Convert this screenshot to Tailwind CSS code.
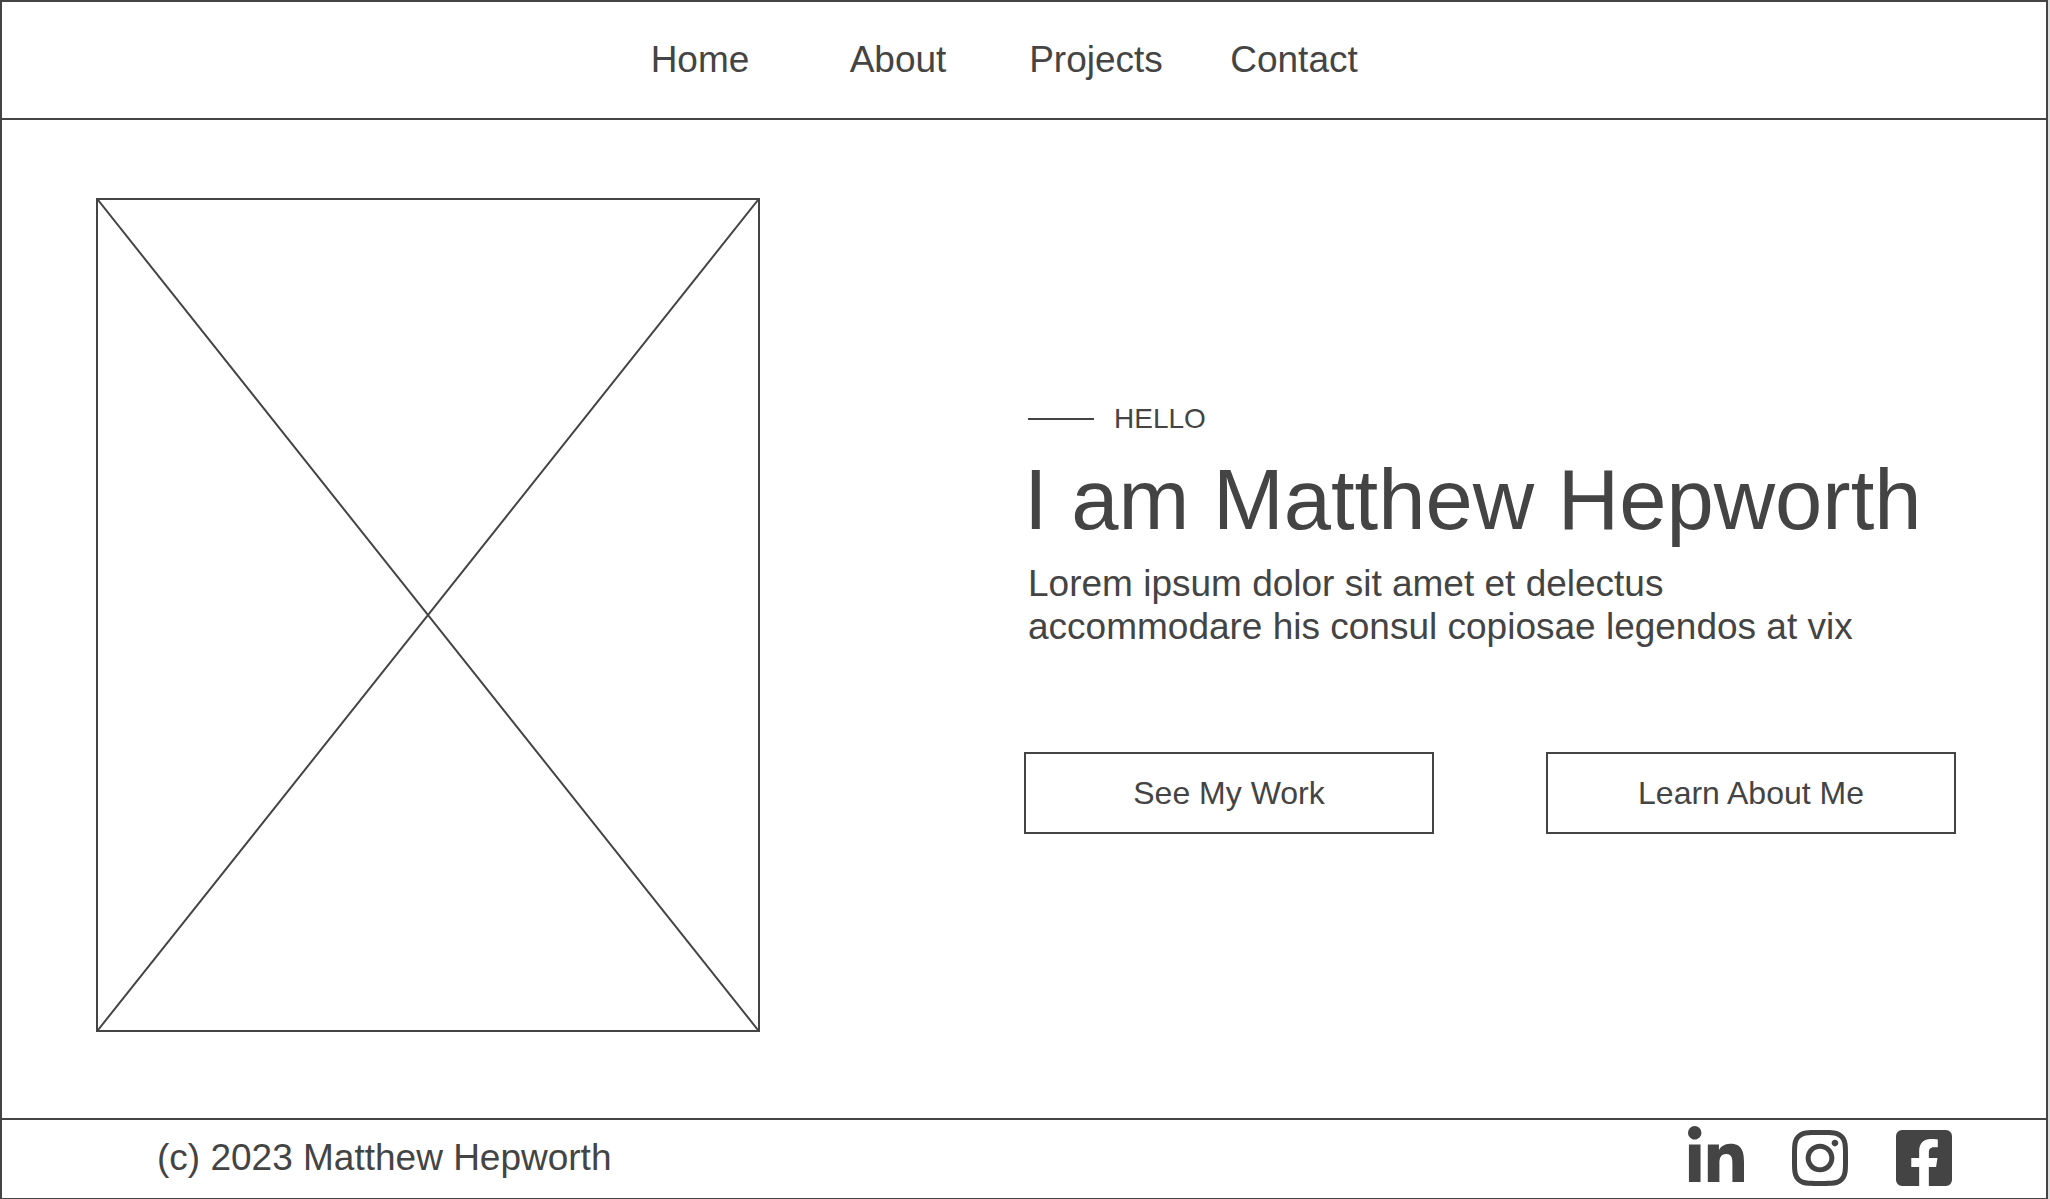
<!DOCTYPE html>
<html lang="en">
<head>
<meta charset="utf-8">
<meta name="viewport" content="width=device-width, initial-scale=1">
<title>Matthew Hepworth</title>
<script src="https://cdn.jsdelivr.net/npm/@tailwindcss/browser@4"></script>
</head>
<body class="bg-[#dcdcdc] pr-[2px] font-['Liberation_Sans',Arial,sans-serif] text-[#444444]">
<div class="flex min-h-screen flex-col border-2 border-b border-[#444444] bg-white">
  <header class="border-b-2 border-[#444444] py-9">
    <nav class="mx-auto w-fit pr-[54px]">
      <ul class="grid grid-cols-[repeat(4,198px)] text-center text-[37px] leading-[44px]">
        <li><a href="#home">Home</a></li>
        <li><a href="#about">About</a></li>
        <li><a href="#projects">Projects</a></li>
        <li><a href="#contact">Contact</a></li>
      </ul>
    </nav>
  </header>

  <main class="grid flex-1 grid-cols-2 items-center">
    <div class="-mt-2 pl-[94px]">
      <!-- portrait placeholder -->
      <div class="aspect-[664/834] w-full max-w-[664px] border-2 border-[#444444]">
        <svg class="block h-full w-full" viewBox="0 0 660 830" preserveAspectRatio="none" stroke="#444444" stroke-width="2" role="img" aria-label="Portrait">
          <path d="M0 0L660 830M660 0L0 830"/>
        </svg>
      </div>
    </div>
    <section class="pr-[90px] pb-px">
      <div class="pl-1">
        <div class="flex items-center gap-5">
          <span class="h-[2px] w-[66px] bg-[#444444]"></span>
          <span class="text-[28px] leading-8">HELLO</span>
        </div>
        <h1 class="-ml-1 mt-[17px] text-[85px] leading-[96px] whitespace-nowrap">I am Matthew Hepworth</h1>
        <p class="mt-[14px] text-[37px] leading-[43px]">Lorem ipsum dolor sit amet et delectus<br>accommodare his consul copiosae legendos at vix</p>
      </div>
      <div class="mt-[104px] flex justify-between">
        <button type="button" class="h-[82px] w-[410px] border-2 border-[#444444] text-[32px]">See My Work</button>
        <button type="button" class="h-[82px] w-[410px] border-2 border-[#444444] text-[32px]">Learn About Me</button>
      </div>
    </section>
  </main>

  <footer class="flex items-center justify-between border-t-2 border-[#444444] pt-[6px] pr-[94px] pb-2 pl-[155px]">
    <p class="text-[37px] leading-[44px]">(c) 2023 Matthew Hepworth</p>
    <div class="flex gap-12">
      <a href="#linkedin" aria-label="LinkedIn"><svg class="block h-16 w-14" viewBox="0 0 448 512" fill="currentColor"><path d="M100.28 448H7.4V148.9h92.88zM53.79 108.1C24.09 108.1 0 83.5 0 53.8a53.79 53.79 0 0 1 107.58 0c0 29.7-24.1 54.3-53.79 54.3zM447.9 448h-92.68V302.4c0-34.7-.7-79.2-48.29-79.2-48.29 0-55.69 37.7-55.69 76.7V448h-92.78V148.9h89.08v40.8h1.3c12.4-23.5 42.69-48.3 87.88-48.3 94 0 111.28 61.9 111.28 142.3V448z"/></svg></a>
      <a href="#instagram" aria-label="Instagram"><svg class="block h-16 w-14" viewBox="0 0 448 512" fill="currentColor"><path d="M224.1 141c-63.6 0-114.9 51.3-114.9 114.9s51.3 114.9 114.9 114.9S339 319.5 339 255.9 287.7 141 224.1 141zm0 189.6c-41.1 0-74.7-33.5-74.7-74.7s33.5-74.7 74.7-74.7 74.7 33.5 74.7 74.7-33.6 74.7-74.7 74.7zm146.4-194.3c0 14.9-12 26.8-26.8 26.8-14.9 0-26.8-12-26.8-26.8s12-26.8 26.8-26.8 26.8 12 26.8 26.8zm76.1 27.2c-1.7-35.9-9.9-67.7-36.2-93.9-26.2-26.2-58-34.4-93.9-36.2-37-2.1-147.9-2.1-184.9 0-35.8 1.7-67.6 9.9-93.9 36.1s-34.4 58-36.2 93.9c-2.1 37-2.1 147.9 0 184.9 1.7 35.9 9.9 67.7 36.2 93.9s58 34.4 93.9 36.2c37 2.1 147.9 2.1 184.9 0 35.9-1.7 67.7-9.9 93.9-36.2 26.2-26.2 34.4-58 36.2-93.9 2.1-37 2.1-147.8 0-184.8zM398.8 388c-7.8 19.6-22.9 34.7-42.6 42.6-29.5 11.7-99.5 9-132.1 9s-102.7 2.6-132.1-9c-19.6-7.8-34.7-22.9-42.6-42.6-11.7-29.5-9-99.5-9-132.1s-2.6-102.7 9-132.1c7.8-19.6 22.9-34.7 42.6-42.6 29.5-11.7 99.5-9 132.1-9s102.7-2.6 132.1 9c19.6 7.8 34.7 22.9 42.6 42.6 11.7 29.5 9 99.5 9 132.1s2.7 102.7-9 132.1z"/></svg></a>
      <a href="#facebook" aria-label="Facebook"><svg class="block h-16 w-14" viewBox="0 0 448 512" fill="currentColor"><path d="M400 32H48A48 48 0 0 0 0 80v352a48 48 0 0 0 48 48h137.25V327.69h-63V256h63v-54.64c0-62.15 37-96.48 93.67-96.48 27.14 0 55.52 4.84 55.52 4.84v61h-31.27c-30.81 0-40.42 19.12-40.42 38.73V256h68.78l-11 71.69h-57.78V480H400a48 48 0 0 0 48-48V80a48 48 0 0 0-48-48z"/></svg></a>
    </div>
  </footer>
</div>
</body>
</html>
